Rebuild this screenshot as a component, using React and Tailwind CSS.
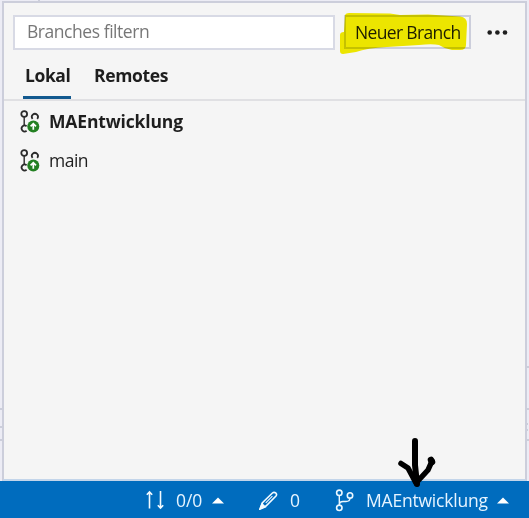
import React from "react";

function BranchIcon() {
  return (
    <svg className="block h-6 w-5 shrink-0" viewBox="0 0 20 24" fill="none" stroke="#2b2b2b" strokeWidth="1.8">
      <circle cx="4.2" cy="4" r="2.9" />
      <path d="M4.2 7v9" strokeWidth="1.4" />
      <path d="M6.6 16.2a3 3 0 1 0 0 4.6" />
      <path d="M12.6 8.8a3 3 0 1 1 4.6 0" />
      <circle cx="13.3" cy="16.6" r="6" fill="#238022" stroke="none" />
      <path d="M13.3 19.8v-6M10.6 16.3l2.7-2.7 2.7 2.7" stroke="#fff" strokeWidth="1.7" />
    </svg>
  );
}

function Caret() {
  return (
    <svg className="block h-[7px] w-3 shrink-0" viewBox="0 0 12 7">
      <path d="M0 6.5 6 .5l6 6Z" fill="white" />
    </svg>
  );
}

function BranchRow({ children, current }) {
  return (
    <div className="flex h-[39px] items-center pl-4">
      <BranchIcon />
      <span className={current ? "ml-[9px] pb-0.5 text-[17.5px] font-bold tracking-[-0.15px]" : "ml-[9px] pb-0.5 text-[17.5px] tracking-[-0.5px]"}>
        {children}
      </span>
    </div>
  );
}

function StatusBar() {
  return (
    <footer className="flex h-[37px] items-center bg-[#006cbe] pt-px text-[17.5px] text-[#e6f4ff]">
      <svg className="ml-[146px] h-5 w-[19px] shrink-0" viewBox="0 0 19 20" fill="none" stroke="#f2faff" strokeWidth="1.6">
        <path d="M3.5 18.5V2M.8 4.8 3.5 2l2.7 2.8M14.5 1v17M11.8 15.2l2.7 2.8 2.7-2.8" />
      </svg>
      <span className="ml-[11px] w-[27px] tracking-[-0.1px]">0/0</span>
      <span className="ml-[9px]"><Caret /></span>
      <svg className="ml-[35px] h-[19px] w-[19px] shrink-0" viewBox="0 0 19 19" fill="none" stroke="#f2faff" strokeWidth="1.6">
        <path d="m1.2 17.8 2.3-6L13.4 2Q15 .7 16.8 2q1.4 1.5.2 3L7 15Z" />
        <path d="m6.8 11.8 6.6-6.6" strokeWidth="1.1" />
        <path d="m1 18 2-5 3 3Z" fill="#f2faff" />
      </svg>
      <span className="ml-[12px] w-[10px]">0</span>
      <svg className="ml-[35px] h-[23px] w-5 shrink-0" viewBox="0 0 20 23" fill="none" stroke="#eaf7ff" strokeWidth="1.6">
        <circle cx="4.3" cy="3.8" r="2.7" />
        <circle cx="4.3" cy="18.8" r="2.7" />
        <circle cx="15" cy="6.4" r="2.7" />
        <path d="M4.3 6.5v9.6M15 9.3q-.2 3.2-4 3.2H8q-3.3 0-3.7 2.6" strokeWidth="1.4" />
      </svg>
      <span className="ml-[11px] w-[122px] tracking-[-0.2px]">MAEntwicklung</span>
      <span className="ml-[9px]"><Caret /></span>
    </footer>
  );
}

export default function App() {
  return (
    <div className="relative flex h-[518px] w-[529px] flex-col overflow-hidden bg-[#ececf5] font-['Open_Sans','Noto_Sans',sans-serif] leading-6 whitespace-nowrap text-[#1e1e1e]">
      <main className="mt-px mr-0.5 ml-0.5 flex h-[480px] shrink-0 flex-col border-2 border-[#cccedb] border-b-[#c3d5ea] bg-[#f5f5f5]">
        <div className="mt-3 ml-[9px] flex h-[35px] items-start">
          <div className="flex h-[35px] w-[322px] items-center border-2 border-[#d8dae5] bg-white pb-[3px] pl-3 text-[17.5px] tracking-[-0.45px] text-[#777]">
            Branches filtern
          </div>
          <div className="relative ml-[9px] flex h-[34px] w-[127px] items-center border-2 border-[#cccedb] pl-[9px] text-[17.5px] tracking-[-0.65px]">
            Neuer Branch
            <svg className="absolute -top-1 -left-[6px] h-11 w-[130px] mix-blend-multiply" viewBox="0 0 130 44">
              <path d="M5 2Q6 0 9 0L50 .5 60 2 88 1.5 120 3.5Q127 4 127 11L126 32Q126 37 120 37H112Q105 36 99 32 92 30.5 79 32L47 34Q27 35 16 39L3 41Q0 41 0 38V22Q0 19 4 19Z" fill="#f6ef00" />
            </svg>
          </div>
          <svg className="mt-[14px] ml-[16px] h-[7px] w-[21px]" viewBox="0 0 21 7" fill="#1e1e1e">
            <circle cx="2.7" cy="3.5" r="2.3" />
            <circle cx="10.4" cy="3.5" r="2.3" />
            <circle cx="18" cy="3.5" r="2.3" />
          </svg>
        </div>
        <div className="flex h-[51px] items-end border-b-2 border-[#e0e0e3] pl-[19px] text-[17.5px] font-bold">
          <div className="h-9 w-12 border-b-[3px] border-[#12598f] pl-0.5 tracking-[-0.4px]">Lokal</div>
          <div className="ml-[23px] h-9 tracking-[-0.35px]">Remotes</div>
        </div>
        <div className="pt-[1px]">
          <BranchRow current>MAEntwicklung</BranchRow>
          <BranchRow>main</BranchRow>
        </div>
      </main>
      <StatusBar />
      <svg className="pointer-events-none absolute inset-0 h-full w-full" viewBox="0 0 529 518" fill="none">
        <path d="M0 409h2M0 440h2M527 367h2M527 409h2M527 440h2M527 424h1M527 430h1M0 427h2M38 0h2" stroke="#cccedb" strokeWidth="2" />
        <g stroke="#000" strokeLinecap="round" strokeLinejoin="round">
          <path d="M415 441V465L417 484" strokeWidth="6" />
          <path d="M401 463.5 408 468 416 483 428 470 432 461" strokeWidth="5.5" />
          <path d="M431 460 432 462" strokeWidth="6.5" />
        </g>
      </svg>
    </div>
  );
}
